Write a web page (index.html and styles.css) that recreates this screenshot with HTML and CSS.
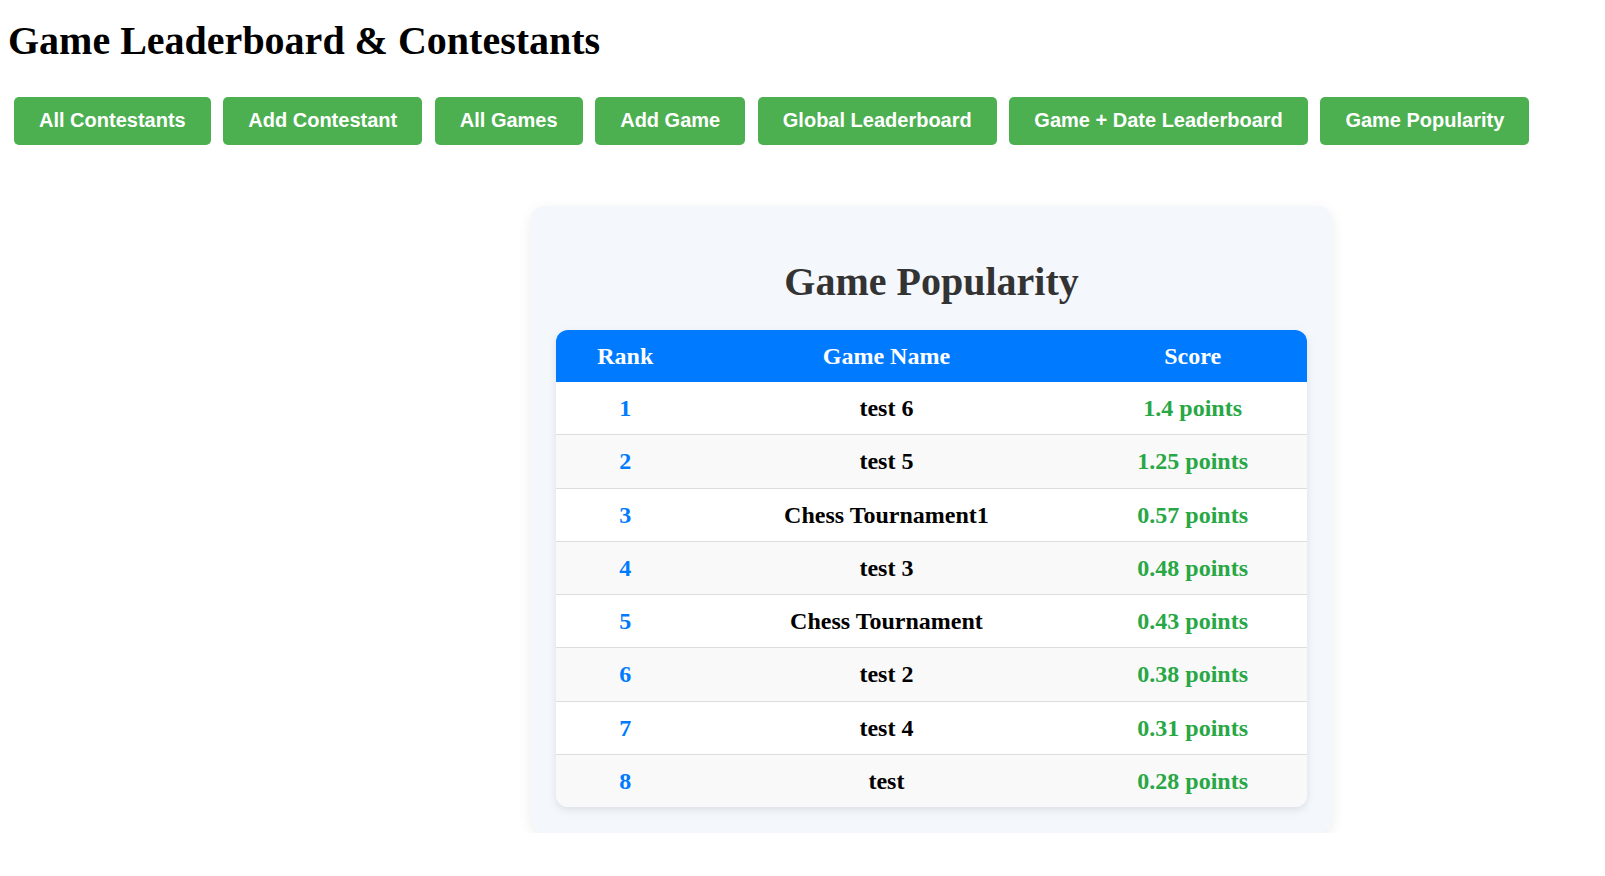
FILE: index.html
```html
<!DOCTYPE html>
<html lang="en">
<head>
<meta charset="utf-8">
<title>Game Leaderboard &amp; Contestants</title>
<link rel="stylesheet" href="styles.css">
</head>
<body>
<h1 class="page-title">Game Leaderboard &amp; Contestants</h1>
<nav class="nav">
  <button class="nav-btn">All Contestants</button>
  <button class="nav-btn">Add Contestant</button>
  <button class="nav-btn">All Games</button>
  <button class="nav-btn">Add Game</button>
  <button class="nav-btn">Global Leaderboard</button>
  <button class="nav-btn">Game + Date Leaderboard</button>
  <button class="nav-btn">Game Popularity</button>
</nav>
<section class="card">
  <h2 class="card-title">Game Popularity</h2>
  <table class="board">
    <thead>
      <tr><th>Rank</th><th>Game Name</th><th>Score</th></tr>
    </thead>
    <tbody>
      <tr><td class="rank">1</td><td class="name">test 6</td><td class="score">1.4 points</td></tr>
      <tr><td class="rank">2</td><td class="name">test 5</td><td class="score">1.25 points</td></tr>
      <tr><td class="rank">3</td><td class="name">Chess Tournament1</td><td class="score">0.57 points</td></tr>
      <tr><td class="rank">4</td><td class="name">test 3</td><td class="score">0.48 points</td></tr>
      <tr><td class="rank">5</td><td class="name">Chess Tournament</td><td class="score">0.43 points</td></tr>
      <tr><td class="rank">6</td><td class="name">test 2</td><td class="score">0.38 points</td></tr>
      <tr><td class="rank">7</td><td class="name">test 4</td><td class="score">0.31 points</td></tr>
      <tr><td class="rank">8</td><td class="name">test</td><td class="score">0.28 points</td></tr>
    </tbody>
  </table>
</section>
</body>
</html>
```
FILE: styles.css
```css
body {
  margin: 8px;
  background: #ffffff;
  font-family: "Liberation Serif", "Times New Roman", serif;
  color: #000;
}
.page-title {
  font-size: 40px;
  font-weight: bold;
  line-height: 46px;
  margin: 10px 0 33px 0;
}
.nav {
  display: flex;
  gap: 12.6px;
  padding-left: 6px;
}
.nav-btn {
  background: #4caf50;
  color: #fff;
  border: none;
  border-radius: 5px;
  padding: 12px 25px;
  font-family: "Liberation Sans", Arial, sans-serif;
  font-size: 20px;
  font-weight: bold;
  line-height: 23.5px;
  cursor: pointer;
}
.card {
  box-sizing: border-box;
  width: 801px;
  margin: 61px 0 0 523px;
  padding: 25px 25px 26px 25px;
  background: #f4f7fc;
  border-radius: 14px;
  box-shadow: 0 4px 14px rgba(0, 0, 0, 0.08);
}
.card-title {
  text-align: center;
  font-size: 40px;
  line-height: 46px;
  color: #333;
  margin: 28px 0 25px 0;
}
.board {
  width: 100%;
  border-collapse: collapse;
  border-radius: 12px;
  overflow: hidden;
  box-shadow: 0 3px 8px rgba(0, 0, 0, 0.1);
  font-size: 24px;
}
.board th {
  background: #007bff;
  color: #fff;
  font-weight: bold;
  padding: 12px 14px;
  line-height: 28.5px;
  text-align: center;
}
.board td {
  padding: 12px 14px;
  line-height: 28.3px;
  text-align: center;
  font-weight: bold;
  border-bottom: 1px solid #dddddd;
}
.board tbody tr:last-child td {
  border-bottom: none;
}
.board tbody tr {
  background: #ffffff;
}
.board tbody tr:nth-child(even) {
  background: #f9f9f9;
}
.rank { color: #007bff; }
.name { color: #000; }
.score { color: #28a745; }
```
